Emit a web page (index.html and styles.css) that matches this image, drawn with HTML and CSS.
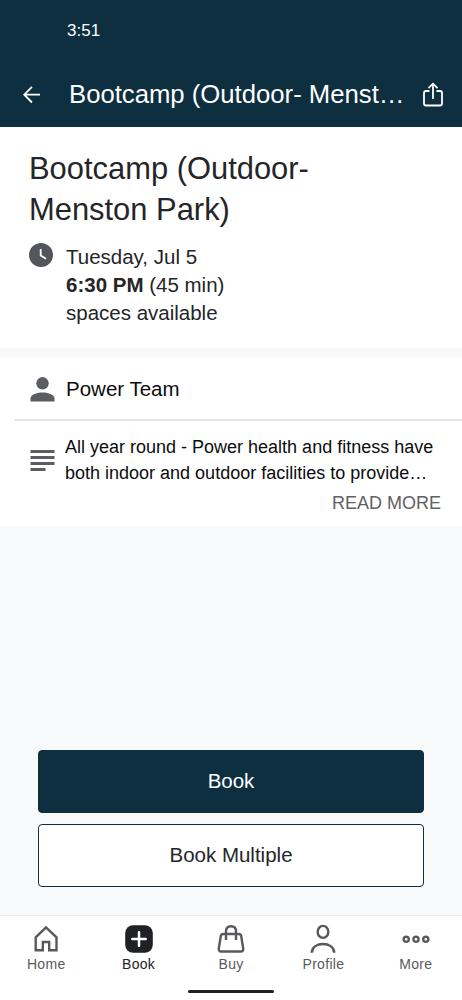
FILE: index.html
```
<!DOCTYPE html>
<html lang="en">
<head>
    <meta charset="utf-8">
    <meta name="viewport" content="width=device-width, initial-scale=1.0">
    <title>Bootcamp (Outdoor- Menston Park)</title>
    <link rel="stylesheet" href="styles.css">
</head>
<body>
    <header class="header">
        <div class="status-bar">3:51</div>
        <div class="title-bar">
            <svg class="back" width="18" height="18" viewBox="0 0 18 18">
                <path d="M17 8.700H1.500M9 0.900L1.200 8.700L9 16.500"/>
            </svg>
            <div class="title">Bootcamp (Outdoor- Menst…</div>
            <svg class="share" width="22" height="26" viewBox="0 0 22 26">
                <path d="M7.500 9H4Q2 9 2 11V21.500Q2 23.500 4 23.500H18Q20 23.500 20 21.500V11Q20 9 18 9H14.500M11 17V2M6.500 6.200L11 1.700L15.500 6.200"/>
            </svg>
        </div>
    </header>

    <main>
        <section class="summary">
            <h1>Bootcamp (Outdoor-<br>Menston Park)</h1>
            <div class="when">
                <svg width="24" height="24" viewBox="0 0 24 24">
                    <circle cx="12" cy="12" r="12" fill="#54565d"/>
                    <path d="M11.700 6V12.500L17 15.800" fill="none" stroke="#fff" stroke-width="1.800"/>
                </svg>
                <div>
                    <div>Tuesday, Jul 5</div>
                    <div><b>6:30 PM</b> (45 min)</div>
                    <div>spaces available</div>
                </div>
            </div>
        </section>

        <section class="details">
            <div class="staff">
                <svg width="25" height="25" viewBox="0 0 25 25" fill="#5b5d62">
                    <circle cx="12.500" cy="6.300" r="6.200"/>
                    <path d="M0.500 24.500V21.500C0.500 17.500 8 15.600 12.500 15.600S24.500 17.500 24.500 21.500V24.500Z"/>
                </svg>
                <span>Power Team</span>
            </div>
            <div class="about">
                <svg width="25" height="24" viewBox="0 0 25 24" fill="#5b5d62">
                    <path d="M0.500 2H24.500V5H0.500ZM0.500 8H24.500V11H0.500ZM0.500 14H24.500V17H0.500ZM0.500 20H15.500V23H0.500Z"/>
                </svg>
                <p>All year round - Power health and fitness have<br>both indoor and outdoor facilities to provide…</p>
            </div>
            <a class="read-more">READ MORE</a>
        </section>

        <div class="actions">
            <button class="btn primary">Book</button>
            <button class="btn">Book Multiple</button>
        </div>
    </main>

    <!-- Bottom tabs -->
    <nav>
        <div class="tabs">
            <a class="tab">
                <svg width="30" height="30" viewBox="0 0 30 30">
                    <path d="M4.700 26.300V13.300L15 3.300L25.500 13.300V26.300H18.200V18H11.800V26.300Z"/>
                </svg>
                <span>Home</span>
            </a>
            <a class="tab active">
                <svg width="30" height="30" viewBox="0 0 30 30">
                    <rect x="1.200" y="1.200" width="27.600" height="27.600" rx="8" fill="#202124" stroke="none"/>
                    <path d="M15 8.300V21.700M8.300 15H21.700" stroke="#fff" stroke-width="2.500" stroke-linecap="round"/>
                </svg>
                <span>Book</span>
            </a>
            <a class="tab">
                <svg width="30" height="30" viewBox="0 0 30 30">
                    <path d="M7.300 10H22.700Q24.800 10 25.200 12L27.200 24.500Q27.500 27.500 24.800 27.500H5.200Q2.500 27.500 2.800 24.500L4.800 12Q5.200 10 7.300 10Z"/>
                    <path d="M10 16V7.500Q10 2.300 15 2.300T20 7.500V16"/>
                </svg>
                <span>Buy</span>
            </a>
            <a class="tab">
                <svg width="30" height="30" viewBox="0 0 30 30">
                    <ellipse cx="15" cy="7.900" rx="5.300" ry="6"/>
                    <path d="M3.800 28.700C3.800 17 26.200 17 26.200 28.700"/>
                </svg>
                <span>Profile</span>
            </a>
            <a class="tab">
                <svg width="30" height="30" viewBox="0 0 30 30">
                    <circle cx="5.200" cy="15.300" r="2.600"/>
                    <circle cx="15" cy="15.300" r="2.600"/>
                    <circle cx="24.800" cy="15.300" r="2.600"/>
                </svg>
                <span>More</span>
            </a>
        </div>
        <div class="home-indicator"></div>
    </nav>
</body>
</html>
```

FILE: styles.css
```
* {
    box-sizing: border-box;
}

body {
    margin: 0;
    height: 1000px;
    display: flex;
    flex-direction: column;
    overflow: hidden;
    font-family: "Liberation Sans", Arial, sans-serif;
    color: #242528;
    background: #f8f9fb;
}

svg {
    display: block;
    flex-shrink: 0;
}

.header {
    height: 127px;
    background: #0d2f40;
    color: #fff;
}

.status-bar {
    height: 62px;
    padding-left: 67px;
    font-size: 17px;
    line-height: 62px;
}

.title-bar {
    height: 65px;
    display: flex;
    align-items: center;
    padding: 0 18px 0 23px;
}

.title-bar svg {
    fill: none;
    stroke: #fff;
    stroke-width: 1.8;
}

.title {
    flex: 1;
    margin-left: 28px;
    font-size: 25.7px;
    line-height: 65px;
    white-space: nowrap;
}

main {
    flex: 1;
    display: flex;
    flex-direction: column;
}

.summary {
    height: 221px;
    padding: 21px 29px 0;
    background: #fff;
}

h1 {
    margin: 0;
    font-size: 30.9px;
    font-weight: normal;
    line-height: 41px;
}

.when {
    display: flex;
    gap: 13px;
    margin-top: 13px;
    font-size: 20.5px;
    line-height: 28.2px;
}

.details {
    height: 168px;
    margin-top: 10px;
    background: #fff;
    color: #0c0c0d;
}

.staff {
    height: 63px;
    display: flex;
    align-items: center;
    gap: 11px;
    margin-left: 14px;
    padding: 1px 0 0 16px;
    border-bottom: 2px solid #e4e5e6;
    font-size: 20.5px;
}

.about {
    display: flex;
    align-items: center;
    gap: 10px;
    padding: 13px 0 0 30px;
}

.about p {
    margin: 0;
    font-size: 18px;
    line-height: 26px;
    white-space: nowrap;
}

.read-more {
    display: block;
    margin: 1px 21px 0 0;
    text-align: right;
    font-size: 18px;
    line-height: 33px;
    color: #5f6166;
}

.actions {
    display: flex;
    flex-direction: column;
    gap: 11px;
    margin-top: auto;
    padding: 0 38px 28px;
}

.btn {
    height: 63px;
    padding: 0 0 2px;
    border: 1.5px solid #0d2f40;
    border-radius: 4px;
    background: #fff;
    color: #242528;
    font-family: inherit;
    font-size: 20.5px;
}

.btn.primary {
    background: #0d2f40;
    color: #fff;
}

nav {
    height: 85px;
    border-top: 1px solid #ebecee;
    background: #fff;
}

.tabs {
    display: flex;
    height: 74px;
    padding-top: 8px;
}

.tab {
    flex: 1;
    display: flex;
    flex-direction: column;
    align-items: center;
    font-size: 14px;
    line-height: 20px;
    letter-spacing: 0.3px;
    color: #58595d;
}

.tab svg {
    fill: none;
    stroke: #58595d;
    stroke-width: 2.4;
}

.tab.active {
    color: #202124;
}

.home-indicator {
    width: 86px;
    height: 3px;
    margin: 0 auto;
    border-radius: 2px;
    background: #202124;
}
```
